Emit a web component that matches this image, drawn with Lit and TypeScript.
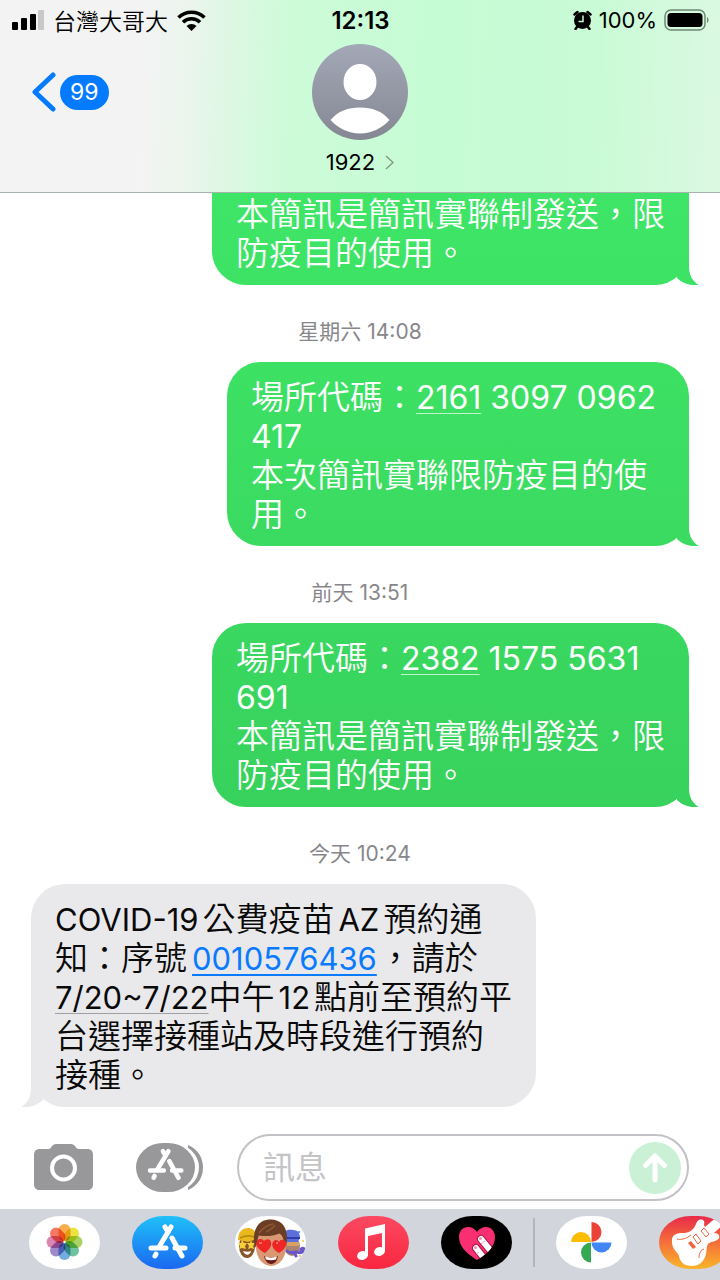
import { LitElement, html, svg, css, nothing } from "lit";
import type { TemplateResult } from "lit";
import { customElement, property, state } from "lit/decorators.js";
import { classMap } from "lit/directives/class-map.js";

interface Run {
  text: string;
  kind?: "code" | "link" | "date";
}

interface Message {
  time?: string;
  own: boolean;
  continued?: boolean;
  lines: Run[][];
}

const MESSAGES: Message[] = [
  {
    own: true,
    continued: true,
    lines: [
      [{ text: "本簡訊是簡訊實聯制發送，限" }],
      [{ text: "防疫目的使用。" }],
    ],
  },
  {
    time: "星期六 14:08",
    own: true,
    lines: [
      [
        { text: "場所代碼：" },
        { text: "2161", kind: "code" },
        { text: " 3097 0962 " },
      ],
      [{ text: "417" }],
      [{ text: "本次簡訊實聯限防疫目的使" }],
      [{ text: "用。" }],
    ],
  },
  {
    time: "前天 13:51",
    own: true,
    lines: [
      [
        { text: "場所代碼：" },
        { text: "2382", kind: "code" },
        { text: " 1575 5631 " },
      ],
      [{ text: "691" }],
      [{ text: "本簡訊是簡訊實聯制發送，限" }],
      [{ text: "防疫目的使用。" }],
    ],
  },
  {
    time: "今天 10:24",
    own: false,
    lines: [
      [{ text: "COVID-19公費疫苗AZ預約通" }],
      [
        { text: "知：序號" },
        { text: "0010576436", kind: "link" },
        { text: "，請於" },
      ],
      [{ text: "7/20~7/22", kind: "date" }, { text: "中午12點前至預約平" }],
      [{ text: "台選擇接種站及時段進行預約" }],
      [{ text: "接種。" }],
    ],
  },
];

const appStoreGlyph = svg`
  <g fill="none" stroke="#fff" stroke-width="5" stroke-linecap="round">
    <path d="M39 11 27 31" />
    <path d="M33 11 36 16" />
    <path d="M40 22 50 40" />
    <path d="M24 38 23 40" />
    <path d="M19 32H34M43 32H53" />
  </g>
`;

const PETALS = [
  "#f8a02e",
  "#e8de1c",
  "#9acb48",
  "#56b98c",
  "#5a9fd8",
  "#8d74c2",
  "#d66fa4",
  "#f2604a",
];

const photosIcon = html`
  <svg viewBox="0 0 71 53">
    <rect width="71" height="53" fill="#fff" />
    ${PETALS.map(
      (color, i) => svg`
        <rect x="29.500" y="8" width="12" height="17" rx="6" fill=${color}
          fill-opacity="0.85" style="mix-blend-mode: multiply"
          transform="rotate(${i * 45} 35.5 26)" />
      `
    )}
  </svg>
`;

const appStoreIcon = html`
  <svg viewBox="0 0 71 53">
    <defs>
      <linearGradient id="store" x2="0" y2="1">
        <stop offset="0" stop-color="#1fc0f9" />
        <stop offset="1" stop-color="#1a68f0" />
      </linearGradient>
    </defs>
    <rect width="71" height="53" fill="url(#store)" />
    ${appStoreGlyph}
  </svg>
`;

const memojiIcon = html`
  <svg viewBox="0 0 71 53">
    <rect width="71" height="53" fill="#fff" />
    <!-- left face -->
    <ellipse cx="12" cy="30" rx="8" ry="12" fill="#8a5628" />
    <path d="M3 24C3 15 8 12 13 12s9 4 8 11l-8 3z" fill="#e9b81f" />
    <path d="M5 22c4-2 9-3 14-1" stroke="#b98a12" stroke-width="1.5" fill="none" />
    <path d="M7 24l2 3 3 0-2 3 1 3-4-1-3 1 1-3-2-3 3 0z" fill="#f6cf3b" />
    <path d="M16 24l1 3 3 0-2 3 1 3-3-1-3 1 1-3-2-3 3 0z" fill="#f6cf3b" />
    <path d="M8 35c3 1 6 1 8 0-1 5-6 5-8 0z" fill="#fff" />
    <!-- right face -->
    <ellipse cx="57" cy="30" rx="8" ry="10" fill="#a98374" />
    <path d="M49 20c0-6 4-7 9-6 5 0 7 3 7 8l-3 5H50z" fill="#5b6fdc" />
    <path d="M50 22h15" stroke="#2f3da6" stroke-width="2" />
    <path d="M52 28h12" stroke="#d9a066" stroke-width="4" />
    <path d="M52 35c4 4 8 0 10 1 4 2 8-1 7-3s-4 0-3 2M59 36l2 4"
      stroke="#6a55c9" stroke-width="3" fill="none" stroke-linecap="round" />
    <circle cx="64" cy="16" r="1" fill="#3d7be0" />
    <circle cx="68" cy="25" r="1" fill="#f0c93a" />
    <circle cx="65" cy="40" r="1" fill="#f0c93a" />
    <!-- front face -->
    <ellipse cx="36" cy="31" rx="15" ry="19" fill="#d99873" />
    <path d="M20 32C16 15 23 4 34 3.500c12-1 21 8 17 26l-2-1c0-6-2-10-5-11-6 3-15 3-20 2-2 4-1 8-4 12.500z"
      fill="#6b3d24" />
    <path d="M24 17c4-5 8-8 14-9M31 16c4-2 7-4 9-7" stroke="#8d5836"
      stroke-width="1.500" fill="none" />
    <path d="M30 37c-8-4-10-9-8-12 2-3 6-2 7 0 2-2 6-3 7 1 1 4-2 8-6 11z" fill="#ee2626" />
    <path d="M44 37c-6-3-8-8-6-11 2-3 5-2 6 0 1-3 5-3 7 0 1 4-2 8-7 11z" fill="#ee2626" />
    <path d="M24 27l3 0M41 27l2 0" stroke="#ff8a7a" stroke-width="1.500" />
    <path d="M29 40c4 2 10 2 14 0-1 6-4 8-7 8s-6-3-7-8z" fill="#6b1f1a" />
    <path d="M30 40.500c4 1.500 8 1.500 12 0l-1 3c-3 1-7 1-10 0z" fill="#fff" />
  </svg>
`;

const musicIcon = html`
  <svg viewBox="0 0 71 53">
    <defs>
      <linearGradient id="music" x2="0" y2="1">
        <stop offset="0" stop-color="#fb4a62" />
        <stop offset="1" stop-color="#f9263f" />
      </linearGradient>
    </defs>
    <rect width="71" height="53" fill="url(#music)" />
    <path d="M27 12.500 47 8v28h-3V17l-14 3v20h-3z" fill="#fff" />
    <ellipse cx="24.500" cy="39.500" rx="5.500" ry="4.300" fill="#fff" transform="rotate(-15 24.500 39.500)" />
    <ellipse cx="41.500" cy="35.500" rx="5.500" ry="4.300" fill="#fff" transform="rotate(-15 41.500 35.500)" />
  </svg>
`;

const heartIcon = html`
  <svg viewBox="0 0 71 53">
    <defs>
      <clipPath id="heart">
        <path d="M36 44C24 37 18 29 18 21c0-6 4-10 9-10 4 0 7 2 9 5 2-3 5-5 9-5 5 0 9 4 9 10 0 8-6 16-18 23z" />
      </clipPath>
    </defs>
    <rect width="71" height="53" fill="#000" />
    <g clip-path="url(#heart)">
      <rect width="71" height="53" fill="#f92f72" />
      <g fill="none" stroke-linecap="round">
        <path d="M40 23 54 40M35 32 46 46" stroke="#a31246" stroke-width="8" />
        <path d="M40 23 54 40M35 32 46 46" stroke="#fff" stroke-width="6" />
      </g>
      <path d="M44 25l-4 3M38 36l-3 2" stroke="#f0a0b8" stroke-width="1" />
    </g>
    <circle cx="39.500" cy="22.500" r="1.500" fill="#f792b3" />
    <circle cx="34.500" cy="31.500" r="1.500" fill="#f792b3" />
  </svg>
`;

const googlePhotosIcon = html`
  <svg viewBox="0 0 71 53">
    <rect width="71" height="53" fill="#fff" />
    <path d="M35.500 6a10 10 0 0 1 0 20z" fill="#ea4335" />
    <path d="M55.500 26.500a10 10 0 0 1-20 0z" fill="#4285f4" />
    <path d="M35 46.500a10 10 0 0 1 0-20z" fill="#34a853" />
    <path d="M15 26a10 10 0 0 1 20 0z" fill="#fbbc04" />
  </svg>
`;

const garageBandIcon = html`
  <svg viewBox="0 0 71 53">
    <defs>
      <linearGradient id="band" x2="0" y2="1">
        <stop offset="0" stop-color="#e92a4a" />
        <stop offset="0.500" stop-color="#f4703a" />
        <stop offset="1" stop-color="#f9b52a" />
      </linearGradient>
    </defs>
    <rect width="71" height="53" fill="url(#band)" />
    <path d="M13 23c1-6 8-6 13-6 6-1 9-4 11-9 1-4 5-6 8-3 1 2-1 4 1 6L60-1l7 7-12 11c4 0 6 2 5 5-2 4-8 3-11 6-2 3-1 6-2 10-2 8-7 12-14 12-8 0-12-4-13-10-1-4-8-6-7-17z"
      fill="#fff" />
    <g fill="none" stroke="#f0633c" stroke-width="1">
      <path d="M34 21l3-3 5 7-3 3zM42 15l3-3 5 6-3 3z" />
      <path d="M18 23c4 1 9 0 14-4M45 33c-3 1-5 4-5 9" />
    </g>
    <path d="M29 27l3-2 5 6-3 2z" fill="#f0633c" />
  </svg>
`;

@customElement("message-bubble")
export class MessageBubble extends LitElement {
  @property({ attribute: false }) message!: Message;

  static styles = css`
    :host {
      display: flex;
      flex-direction: column;
    }
    time {
      align-self: center;
      padding: 31px 0 15px;
      height: 31px;
      line-height: 31px;
      font-size: 21px;
      color: #87878b;
    }
    .bubble {
      position: relative;
      align-self: flex-start;
      box-sizing: border-box;
      margin: 0;
      padding: 16px 24px 12px;
      border-radius: 34px;
      background: #e9e9eb;
      color: #0a0a0a;
      font-size: 33px;
      font-weight: 350;
      line-height: 39px;
      white-space: pre;
    }
    .bubble.own {
      align-self: flex-end;
      background: linear-gradient(#41e96a, #3de264 25%, #37d15c 65%, #35c759) fixed;
      color: #fff;
    }
    .bubble.continued {
      padding-top: 4px;
      border-top-left-radius: 0;
      border-top-right-radius: 0;
    }
    .bubble::after {
      content: "";
      position: absolute;
      left: -10px;
      bottom: 0;
      width: 30px;
      height: 40px;
      background: inherit;
      clip-path: path("M20 0H10V22C10 30 6 37 0 40C9 41 17 38 22 33Z");
    }
    .bubble.own::after {
      left: auto;
      right: -10px;
      clip-path: path("M10 0H20V22C20 30 24 37 30 40C21 41 13 38 8 33Z");
    }
    .line {
      display: block;
    }
    .bubble .latin {
      font-size: 31px;
      font-weight: 400;
    }
    .own .latin {
      font-size: 32px;
    }
    .incoming .latin {
      margin: 0 4px;
    }
    .incoming .line > .latin:first-child,
    .incoming a .latin {
      margin-left: 0;
    }
    .incoming a .latin {
      margin-right: 0;
    }
    a {
      color: inherit;
      text-decoration-thickness: 1px;
      text-underline-offset: 4px;
    }
    a.code {
      text-decoration-color: #c0f4cd;
    }
    a.date {
      text-decoration-color: #a0a0a3;
    }
    a.link {
      margin: 0 2px 0 5px;
      color: #0a7aff;
      text-decoration-thickness: 2px;
    }
  `;

  // Latin runs are set a little smaller than the Chinese text around them
  private _renderText(text: string) {
    return text
      .split(/([\x20-\x7e]+)/)
      .filter((part) => part)
      .map((part) =>
        /^[\x20-\x7e]/.test(part)
          ? html`<span class="latin">${part}</span>`
          : part
      );
  }

  private _renderRun(run: Run) {
    const text = this._renderText(run.text);
    if (!run.kind) return text;
    const href = run.kind === "date" ? "#" : `tel:${run.text}`;
    return html`<a class=${run.kind} href=${href}>${text}</a>`;
  }

  render() {
    const { time, own, continued, lines } = this.message;
    const classes = { bubble: true, own, incoming: !own, continued: !!continued };

    return html`
      ${time ? html`<time>${this._renderText(time)}</time>` : nothing}
      <p class=${classMap(classes)}>${lines.map(
        (line) =>
          html`<span class="line">${line.map((run) => this._renderRun(run))}</span>`
      )}</p>
    `;
  }
}

@customElement("app-root")
export class AppRoot extends LitElement {
  @state() private _draft = "";

  static styles = css`
    :host {
      display: flex;
      flex-direction: column;
      height: 100vh;
      overflow: hidden;
      background: #fff;
      color: #000;
      font-family: Inter, "Noto Sans CJK TC", sans-serif;
    }
    svg {
      display: block;
    }
    button {
      display: flex;
      align-items: center;
      padding: 0;
      border: 0;
      background: none;
      color: inherit;
      font: inherit;
      cursor: pointer;
    }
    header {
      flex: none;
      border-bottom: 1px solid #a5b5a9;
      background: linear-gradient(
        92deg,
        #f3f3f3 20%,
        #ebf5ed 26%,
        #dbf8e1 33%,
        #cdfbd9 40%,
        #c6fcd4 60%,
        #c9fbd6 82%,
        #dbf8e1
      );
    }
    .status {
      display: grid;
      grid-template-columns: 1fr auto 1fr;
      align-items: center;
      height: 40px;
      padding: 0 11px 0 12px;
      font-size: 22px;
    }
    .status .side {
      display: flex;
      align-items: center;
      gap: 9px;
    }
    .status .side:last-child {
      justify-content: flex-end;
      gap: 7px;
    }
    .carrier {
      font-size: 23px;
      font-weight: 350;
    }
    .clock {
      font-size: 24px;
      font-weight: 600;
    }
    .contact-bar {
      display: grid;
      grid-template-columns: 1fr auto 1fr;
      padding: 4px 32px 14px;
    }
    .back {
      align-self: start;
      gap: 4px;
      height: 96px;
    }
    .badge {
      padding: 0 10px;
      border-radius: 18px;
      background: #047aff;
      color: #fff;
      font-size: 23px;
      line-height: 35px;
    }
    .contact {
      flex-direction: column;
      gap: 6px;
    }
    .name {
      display: flex;
      align-items: center;
      gap: 10px;
      font-size: 22px;
      line-height: 32px;
    }
    main {
      display: flex;
      flex: 1;
      flex-direction: column;
      justify-content: flex-end;
      min-height: 0;
      overflow: hidden;
      padding: 0 31px;
    }
    .composer {
      display: flex;
      flex: none;
      align-items: center;
      gap: 34px;
      padding: 27px 31px 8px 34px;
    }
    .tools {
      display: flex;
      flex: none;
      align-items: center;
      gap: 42px;
    }
    .field {
      display: flex;
      flex: 1;
      align-items: center;
      min-width: 0;
      height: 63px;
      padding: 0 6px 0 24px;
      border: 2px solid #c3c1c5;
      border-radius: 34px;
    }
    .field input {
      flex: 1;
      min-width: 0;
      padding: 0;
      border: 0;
      outline: none;
      background: none;
      font: inherit;
      font-size: 32px;
    }
    .field input::placeholder {
      color: #c4c4c7;
      opacity: 1;
    }
    .apps {
      display: flex;
      flex: none;
      gap: 21px;
      padding: 7px 0 11px 29px;
      overflow: hidden;
      background: #d2d5db;
    }
    .group {
      display: flex;
      flex: none;
      gap: 32px;
    }
    .app {
      flex: none;
      width: 71px;
      height: 53px;
      overflow: hidden;
      border-radius: 32px / 27px;
      isolation: isolate;
    }
    .app svg {
      width: 100%;
      height: 100%;
    }
    .divider {
      flex: none;
      width: 2px;
      margin: 2px 0;
      background: #b2b5bb;
    }
  `;

  private _renderStatus() {
    return html`
      <div class="status">
        <div class="side">
          <svg width="32" height="20" viewBox="0 0 32 20">
            <rect x="0" y="12" width="6" height="8" rx="1" />
            <rect x="9" y="8" width="6" height="12" rx="1" />
            <rect x="18" y="4" width="6" height="16" rx="1" />
            <rect x="26" y="0" width="6" height="20" rx="1" fill="#c8c8c8" />
          </svg>
          <span class="carrier">台灣大哥大</span>
          <svg width="29" height="21" viewBox="0 0 29 21">
            <g fill="none" stroke="#000" stroke-width="3.500">
              <path d="M1.500 7.500a18.500 18.500 0 0 1 26 0" />
              <path d="M6 12.300a12 12 0 0 1 17 0" />
            </g>
            <path d="M14.500 21 9.500 16a7 7 0 0 1 10 0z" />
          </svg>
        </div>
        <span class="clock">12:13</span>
        <div class="side">
          <svg width="19" height="20" viewBox="0 0 19 20">
            <circle cx="9.500" cy="10.500" r="8.500" />
            <path d="M1.500 4.500 4.500 2M14.500 2l3 2.500M4 17l-1.500 2M15 17l1.500 2" fill="none"
              stroke="#000" stroke-width="2.500" stroke-linecap="round" />
            <path d="M10 5.500v6H5.500" fill="none" stroke="#c8fbd5" stroke-width="1.500" />
          </svg>
          <span>100%</span>
          <svg width="45" height="22" viewBox="0 0 45 22">
            <rect x="1" y="1" width="40" height="20" rx="6" fill="none"
              stroke="#6f8775" stroke-width="1.500" />
            <rect x="3.500" y="4" width="35" height="14" rx="3.500" />
            <path d="M43 8c2 1 2 5 0 6z" fill="#6f8775" />
          </svg>
        </div>
      </div>
    `;
  }

  private _renderContact() {
    return html`
      <div class="contact-bar">
        <button class="back" aria-label="返回">
          <svg width="24" height="40" viewBox="0 0 24 40">
            <path d="M21 3 3 20l18 17" fill="none" stroke="#047aff"
              stroke-width="5" stroke-linecap="round" stroke-linejoin="round" />
          </svg>
          <span class="badge">99</span>
        </button>
        <button class="contact">
          <svg width="96" height="96" viewBox="0 0 96 96">
            <defs>
              <linearGradient id="avatar" x2="0" y2="1">
                <stop offset="0" stop-color="#a3a8b7" />
                <stop offset="1" stop-color="#858893" />
              </linearGradient>
            </defs>
            <circle cx="48" cy="48" r="48" fill="url(#avatar)" />
            <ellipse cx="48" cy="38" rx="16.500" ry="18" fill="#fff" />
            <path d="M18.500 76C26 67 36 63.500 48 63.500S70 67 77.500 76C70 84 60 89.500 48 89.500S26 84 18.500 76z"
              fill="#fff" />
          </svg>
          <span class="name">
            1922
            <svg width="9" height="16" viewBox="0 0 9 16">
              <path d="M1 2l7 6.500L1 15" fill="none" stroke="#7f9d87" stroke-width="1.500" />
            </svg>
          </span>
        </button>
      </div>
    `;
  }

  private _renderComposer() {
    return html`
      <div class="composer">
        <div class="tools">
          <button aria-label="相機">
            <svg width="60" height="47" viewBox="0 0 60 47">
              <path d="M6 5h8c2 0 3-1 4-3 1-1 2-2 4-2h15c2 0 3 1 4 2 1 2 2 3 4 3h8c4 0 6 2 6 6v29c0 4-2 6-6 6H6c-4 0-6-2-6-6V11c0-4 2-6 6-6z"
                fill="#98989a" />
              <circle cx="29.500" cy="24" r="11.500" fill="none" stroke="#fff" stroke-width="4" />
            </svg>
          </button>
          <button aria-label="App">
            <svg width="67" height="49" viewBox="0 0 67 49">
              <path d="M52 2c20 8 20 37 0 45z" fill="#98989a" />
              <rect x="-4" width="67" height="49" rx="27" ry="24.500" fill="#fff" />
              <rect width="59" height="49" rx="27" ry="24.500" fill="#98989a" />
              <g transform="translate(-3.500 -2) scale(0.920)">${appStoreGlyph}</g>
            </svg>
          </button>
        </div>
        <div class="field">
          <input
            type="text"
            aria-label="訊息"
            placeholder="訊息"
            .value=${this._draft}
            @input=${(e: Event) =>
              (this._draft = (e.target as HTMLInputElement).value)}
          />
          <button aria-label="傳送" @click=${() => (this._draft = "")}>
            <svg width="52" height="52" viewBox="0 0 52 52">
              <circle cx="26" cy="26" r="26" fill="#caf0d5" />
              <path d="M26 38V15M16.500 23.500 26 14l9.500 9.500" fill="none" stroke="#fff"
                stroke-width="5" stroke-linecap="round" stroke-linejoin="round" />
            </svg>
          </button>
        </div>
      </div>
    `;
  }

  private _renderApp(label: string, icon: TemplateResult) {
    return html`<button class="app" aria-label=${label}>${icon}</button>`;
  }

  render() {
    return html`
      <header>${this._renderStatus()} ${this._renderContact()}</header>
      <main lang="zh-TW">
        ${MESSAGES.map(
          (message) =>
            html`<message-bubble .message=${message}></message-bubble>`
        )}
      </main>
      ${this._renderComposer()}
      <nav class="apps">
        <div class="group">
          ${this._renderApp("照片", photosIcon)}
          ${this._renderApp("App Store", appStoreIcon)}
          ${this._renderApp("Memoji", memojiIcon)}
          ${this._renderApp("音樂", musicIcon)}
          ${this._renderApp("Digital Touch", heartIcon)}
        </div>
        <div class="divider"></div>
        <div class="group">
          ${this._renderApp("Google 相簿", googlePhotosIcon)}
          ${this._renderApp("GarageBand", garageBandIcon)}
        </div>
      </nav>
    `;
  }
}

declare global {
  interface HTMLElementTagNameMap {
    "app-root": AppRoot;
    "message-bubble": MessageBubble;
  }
}
